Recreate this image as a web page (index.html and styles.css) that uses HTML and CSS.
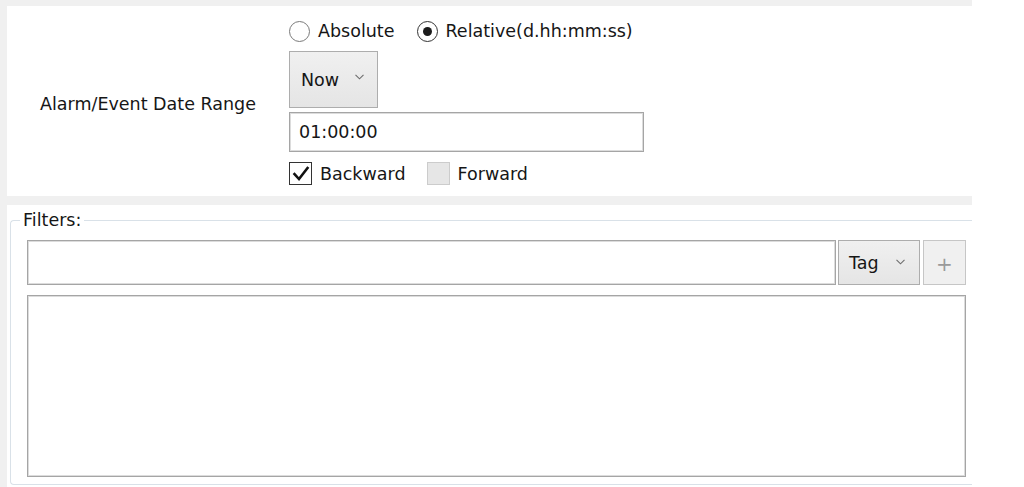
FILE: index.html
```html
<!DOCTYPE html>
<html>
<head>
<meta charset="utf-8">
<link rel="stylesheet" href="styles.css">
</head>
<body>
<div class="frame">
  <section class="range-panel">
    <div class="range-label">Alarm/Event Date Range</div>
    <div class="range-controls">
      <div class="radio-row">
        <label class="radio"><span class="radio-circle"></span><span class="radio-text">Absolute</span></label>
        <label class="radio checked"><span class="radio-circle"><span class="radio-dot"></span></span><span class="radio-text">Relative(d.hh:mm:ss)</span></label>
      </div>
      <div class="combo combo-now">
        <span class="combo-text">Now</span>
        <svg class="chev" width="9" height="6" viewBox="0 0 9 6"><polyline points="0.5,0.8 4.5,4.8 8.5,0.8" fill="none" stroke="#6d6d6d" stroke-width="1.1"/></svg>
      </div>
      <div class="textbox">01:00:00</div>
      <div class="check-row">
        <label class="check checked">
          <span class="check-box"><svg width="20" height="20" viewBox="0 0 20 20"><polyline points="3.5,10 8,15 16.5,4" fill="none" stroke="#111" stroke-width="2.6" stroke-linecap="square"/></svg></span>
          <span class="check-text">Backward</span>
        </label>
        <label class="check unchecked">
          <span class="check-box"></span>
          <span class="check-text">Forward</span>
        </label>
      </div>
    </div>
  </section>
  <section class="filters-panel">
    <fieldset class="filters">
      <legend>Filters:</legend>
      <div class="filters-body">
        <div class="filter-row">
          <div class="filter-input"></div>
          <div class="combo combo-tag">
            <span class="combo-text">Tag</span>
            <svg class="chev" width="9" height="6" viewBox="0 0 9 6"><polyline points="0.5,0.8 4.5,4.8 8.5,0.8" fill="none" stroke="#6d6d6d" stroke-width="1.1"/></svg>
          </div>
          <div class="add-btn">+</div>
        </div>
        <div class="filter-list"></div>
      </div>
    </fieldset>
  </section>
</div>
</body>
</html>
```

FILE: styles.css
```css
html, body {
  margin: 0;
  padding: 0;
  background: #ffffff;
}

.frame {
  box-sizing: border-box;
  width: 972px;
  height: 487px;
  padding: 6px 0 0 7px;
  background: #f0f0f0;
  display: flex;
  flex-direction: column;
  gap: 9px;
  font-family: "DejaVu Sans", sans-serif;
  font-size: 17.5px;
  color: #161616;
}

/* ---------- upper panel ---------- */
.range-panel {
  background: #ffffff;
  height: 190px;
  display: flex;
  flex-shrink: 0;
}

.range-label {
  width: 282px;
  display: flex;
  align-items: center;
  justify-content: center;
  padding-top: 6px;
  white-space: nowrap;
}

.range-controls {
  padding-top: 14px;
  display: flex;
  flex-direction: column;
}

.radio-row {
  height: 22px;
  display: flex;
  align-items: center;
}

.radio {
  display: flex;
  align-items: center;
  white-space: nowrap;
}

.radio + .radio {
  margin-left: 22px;
}

.radio-circle {
  box-sizing: border-box;
  width: 21px;
  height: 21px;
  border: 1px solid #7a7a7a;
  border-radius: 50%;
  background: #ffffff;
  display: flex;
  align-items: center;
  justify-content: center;
  margin-right: 8px;
}

.radio.checked .radio-circle {
  border-color: #333333;
}

.radio-dot {
  width: 9px;
  height: 9px;
  border-radius: 50%;
  background: #1c1c1c;
}

.combo {
  box-sizing: border-box;
  display: flex;
  align-items: center;
  border: 1px solid #adadad;
  background: linear-gradient(#f0f0f0, #e5e5e5);
}

.combo-now {
  margin-top: 9px;
  width: 89px;
  height: 57px;
  padding-left: 11px;
}

.combo-now .chev {
  margin-left: 16px;
  margin-top: -5px;
}

.textbox {
  box-sizing: border-box;
  margin-top: 4px;
  width: 355px;
  height: 40px;
  border: 1px solid #a5a5a5;
  box-shadow: inset 0 0 0 1px #dcdcdc;
  display: flex;
  align-items: center;
  padding-left: 9px;
}

.check-row {
  margin-top: 10px;
  height: 23px;
  display: flex;
  align-items: center;
}

.check {
  display: flex;
  align-items: center;
  white-space: nowrap;
}

.check + .check {
  margin-left: 21px;
}

.check-box {
  box-sizing: border-box;
  width: 23px;
  height: 23px;
  margin-right: 8px;
  display: flex;
  align-items: center;
  justify-content: center;
}

.check.checked .check-box {
  border: 1px solid #333333;
  background: #ffffff;
}

.check.unchecked .check-box {
  border: 1px solid #cccccc;
  background: #e6e6e6;
}

/* ---------- lower panel ---------- */
.filters-panel {
  background: #ffffff;
  flex: 1;
  overflow: hidden;
  display: flex;
  flex-direction: column;
}

.filters {
  flex: 1;
  margin: 5px 0 2px 3px;
  padding: 0;
  border: 1px solid #d9e1e8;
  border-right: none;
  border-radius: 4px 0 0 4px;
  min-width: 0;
  display: flex;
  flex-direction: column;
}

.filters legend {
  margin-left: 9px;
  padding: 0 3px;
  line-height: 20px;
}

.filters-body {
  padding: 10px 6px 7px 16px;
  display: flex;
  flex-direction: column;
  flex: 1;
}

.filter-row {
  height: 45px;
  display: flex;
}

.filter-input {
  box-sizing: border-box;
  flex: 1;
  border: 1px solid #a5a5a5;
  box-shadow: inset 0 0 0 1px #dcdcdc;
  background: #ffffff;
}

.combo-tag {
  margin-left: 2px;
  width: 82px;
  padding-left: 10px;
}

.combo-tag .chev {
  margin-left: 17px;
  margin-top: -2px;
}

.add-btn {
  box-sizing: border-box;
  margin-left: 3px;
  width: 43px;
  border: 1px solid #c6c6c6;
  background: #f0f0f0;
  color: #9a9a9a;
  font-size: 20px;
  display: flex;
  align-items: center;
  justify-content: center;
  padding-top: 3px;
}

.filter-list {
  box-sizing: border-box;
  margin-top: 10px;
  flex: 1;
  border: 1px solid #a5a5a5;
  box-shadow: inset 0 0 0 1px #dcdcdc;
  background: #ffffff;
}
```
